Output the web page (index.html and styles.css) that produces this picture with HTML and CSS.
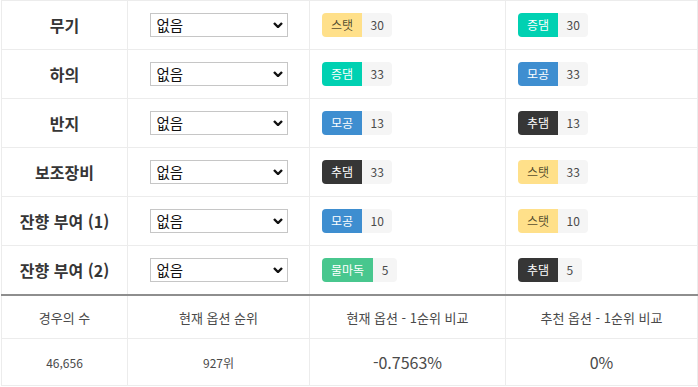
FILE: index.html
```html
<!DOCTYPE html>
<html lang="ko">
<head>
    <meta charset="UTF-8">
    <meta name="viewport" content="width=device-width, initial-scale=1.0">
    <title>옵션 비교</title>
    <link rel="stylesheet" href="styles.css">
</head>
<body>
    <div class="wrap">
        <table class="option-table">
            <colgroup>
                <col class="col-name">
                <col class="col-select">
                <col class="col-current">
                <col class="col-best">
            </colgroup>
            <tbody>
                <tr>
                    <th>무기</th>
                    <td><div class="select-box"><select><option>없음</option></select><svg class="chevron" viewBox="0 0 10 6"><path d="M1 1 L5 5 L9 1"/></svg></div></td>
                    <td><span class="tags"><span class="tag stat">스탯</span><span class="tag num">30</span></span></td>
                    <td><span class="tags"><span class="tag dmg">증댐</span><span class="tag num">30</span></span></td>
                </tr>
                <tr>
                    <th>하의</th>
                    <td><div class="select-box"><select><option>없음</option></select><svg class="chevron" viewBox="0 0 10 6"><path d="M1 1 L5 5 L9 1"/></svg></div></td>
                    <td><span class="tags"><span class="tag dmg">증댐</span><span class="tag num">33</span></span></td>
                    <td><span class="tags"><span class="tag ign">모공</span><span class="tag num">33</span></span></td>
                </tr>
                <tr>
                    <th>반지</th>
                    <td><div class="select-box"><select><option>없음</option></select><svg class="chevron" viewBox="0 0 10 6"><path d="M1 1 L5 5 L9 1"/></svg></div></td>
                    <td><span class="tags"><span class="tag ign">모공</span><span class="tag num">13</span></span></td>
                    <td><span class="tags"><span class="tag add">추댐</span><span class="tag num">13</span></span></td>
                </tr>
                <tr>
                    <th>보조장비</th>
                    <td><div class="select-box"><select><option>없음</option></select><svg class="chevron" viewBox="0 0 10 6"><path d="M1 1 L5 5 L9 1"/></svg></div></td>
                    <td><span class="tags"><span class="tag add">추댐</span><span class="tag num">33</span></span></td>
                    <td><span class="tags"><span class="tag stat">스탯</span><span class="tag num">33</span></span></td>
                </tr>
                <tr>
                    <th>잔향 부여 (1)</th>
                    <td><div class="select-box"><select><option>없음</option></select><svg class="chevron" viewBox="0 0 10 6"><path d="M1 1 L5 5 L9 1"/></svg></div></td>
                    <td><span class="tags"><span class="tag ign">모공</span><span class="tag num">10</span></span></td>
                    <td><span class="tags"><span class="tag stat">스탯</span><span class="tag num">10</span></span></td>
                </tr>
                <tr>
                    <th>잔향 부여 (2)</th>
                    <td><div class="select-box"><select><option>없음</option></select><svg class="chevron" viewBox="0 0 10 6"><path d="M1 1 L5 5 L9 1"/></svg></div></td>
                    <td><span class="tags"><span class="tag atk">물마독</span><span class="tag num">5</span></span></td>
                    <td><span class="tags"><span class="tag add">추댐</span><span class="tag num">5</span></span></td>
                </tr>
            </tbody>
        </table>

        <table class="result-table">
            <colgroup>
                <col class="col-name">
                <col class="col-select">
                <col class="col-current">
                <col class="col-best">
            </colgroup>
            <thead>
                <tr>
                    <th>경우의 수</th>
                    <th>현재 옵션 순위</th>
                    <th>현재 옵션 - 1순위 비교</th>
                    <th>추천 옵션 - 1순위 비교</th>
                </tr>
            </thead>
            <tbody>
                <tr>
                    <td class="small">46,656</td>
                    <td class="small">927위</td>
                    <td class="big">-0.7563%</td>
                    <td class="big">0%</td>
                </tr>
            </tbody>
        </table>
    </div>
</body>
</html>
```

FILE: styles.css
```css
body {
    margin: 0;
    padding: 0;
    font-family: "Noto Sans CJK KR", "Noto Sans", sans-serif;
    color: #4a4a4a;
    background-color: #fff;
}
.wrap {
    padding-left: 1px;
}
table {
    width: 100%;
    border-collapse: collapse;
    table-layout: fixed;
}
.col-name {
    width: 126px;
}
.col-select {
    width: 182px;
}
.col-current {
    width: 196px;
}
.option-table th,
.option-table td {
    border: 1px solid #ececec;
    height: 48px;
    padding: 0 12px;
    vertical-align: middle;
}
.option-table tr:last-child th,
.option-table tr:last-child td {
    border-bottom: none;
}
.option-table th {
    font-size: 16px;
    font-weight: bold;
    color: #363636;
    text-align: center;
    line-height: 20px;
}
.select-box {
    position: relative;
    display: block;
    width: 138px;
    height: 24px;
    margin: -1px auto 0;
}
.select-box select {
    display: block;
    appearance: none;
    -webkit-appearance: none;
    width: 138px;
    height: 24px;
    margin: 0;
    padding: 0 0 0 6px;
    border: 1px solid #c6c6c6;
    border-radius: 0;
    background: #fff;
    font-family: "Noto Sans CJK KR", sans-serif;
    font-size: 14.5px;
    color: #111;
    line-height: 22px;
}
.chevron {
    position: absolute;
    right: 5px;
    top: 9px;
    width: 10px;
    height: 6px;
    pointer-events: none;
}
.chevron path {
    fill: none;
    stroke: #111;
    stroke-width: 2.4;
}
.tags {
    display: flex;
}
.tag {
    display: inline-flex;
    align-items: center;
    height: 24px;
    padding: 0 9px;
    font-size: 12px;
    line-height: 1;
    color: #fff;
}
.tag:first-child {
    border-radius: 4px 0 0 4px;
}
.tag.num {
    padding: 0 8.5px;
    background-color: #f5f5f5;
    color: #4a4a4a;
    border-radius: 0 4px 4px 0;
}
.tag.stat {
    background-color: #ffe08a;
    color: rgba(0, 0, 0, 0.7);
}
.tag.dmg {
    background-color: #00d1b2;
}
.tag.ign {
    background-color: #3e8ed0;
}
.tag.add {
    background-color: #363636;
}
.tag.atk {
    background-color: #48c78e;
}
.result-table {
    border-top: 2px solid #8e8e8e;
}
.result-table th,
.result-table td {
    border: 1px solid #ececec;
    text-align: center;
    vertical-align: middle;
    padding: 0 12px;
}
.result-table tr:first-child th {
    border-top: none;
}
.result-table th {
    height: 42px;
    font-size: 13px;
    font-weight: normal;
    color: #4a4a4a;
}
.result-table td {
    height: 46px;
}
.result-table td.small {
    font-size: 12px;
}
.result-table td.big {
    font-size: 16px;
}
```
